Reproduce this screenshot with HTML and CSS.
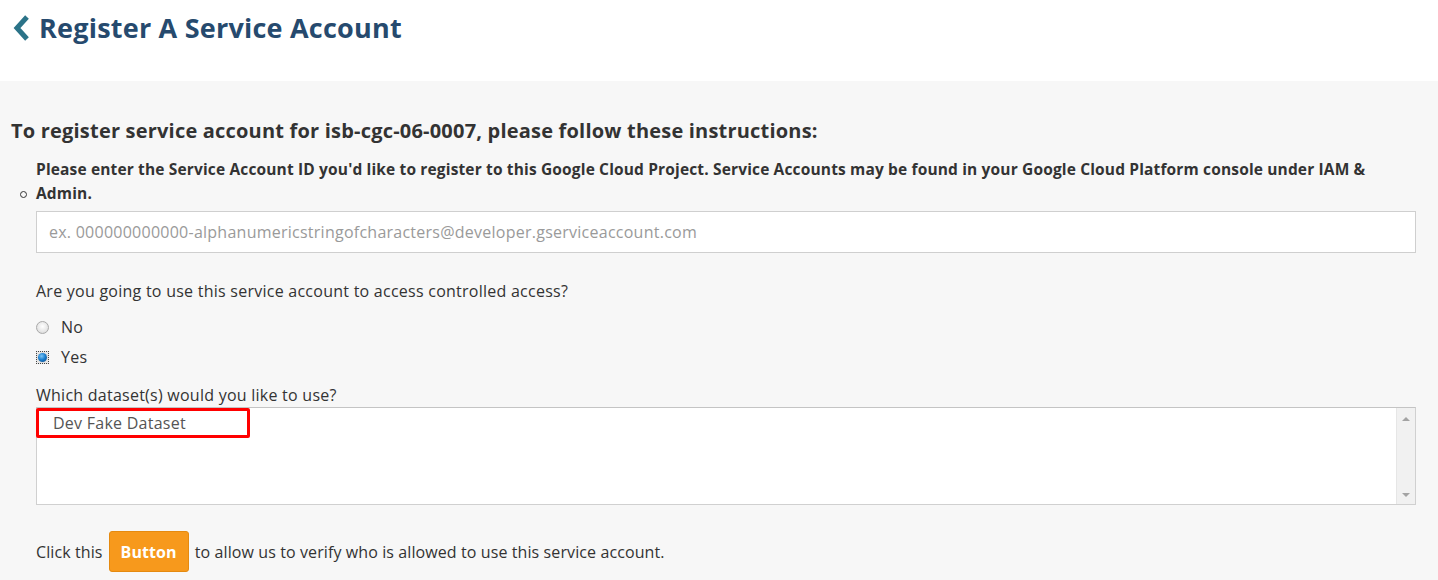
FILE: index.html
```html
<!DOCTYPE html>
<html lang="en">
<head>
<meta charset="utf-8">
<title>Register A Service Account</title>
<link rel="stylesheet" href="styles.css">
</head>
<body>
<header class="page-header">
  <h1 class="page-title">
    <svg class="back-icon" width="18" height="26" viewBox="0 0 18 26" aria-hidden="true">
      <path d="M14 2 L4 13 L14 24" fill="none" stroke="#2b7388" stroke-width="5" stroke-linejoin="miter"/>
    </svg>
    Register A Service Account
  </h1>
</header>
<main class="content">
  <h2 class="instructions">To register service account for isb-cgc-06-0007, please follow these instructions:</h2>
  <ul class="steps">
    <li class="step">
      <p class="step-text">Please enter the Service Account ID you'd like to register to this Google Cloud Project. Service Accounts may be found in your Google Cloud Platform console under IAM &amp; Admin.</p>
      <input class="text-input" type="text" placeholder="ex. 000000000000-alphanumericstringofcharacters@developer.gserviceaccount.com">
      <p class="question">Are you going to use this service account to access controlled access?</p>
      <div class="radio-row"><span class="radio"></span><span class="radio-label">No</span></div>
      <div class="radio-row"><span class="radio radio-checked"><span class="radio-dot"></span></span><span class="radio-label">Yes</span></div>
      <p class="dataset-label">Which dataset(s) would you like to use?</p>
      <div class="listbox">
        <div class="options">
          <div class="option option-marked">Dev Fake Dataset</div>
        </div>
        <div class="scrollbar">
          <span class="arrow arrow-up"></span>
          <span class="arrow arrow-down"></span>
        </div>
      </div>
      <p class="verify">Click this <button class="btn" type="button">Button</button> to allow us to verify who is allowed to use this service account.</p>
    </li>
  </ul>
</main>
</body>
</html>
```
FILE: styles.css
```css
html, body {
  margin: 0;
  padding: 0;
}
body {
  font-family: "Open Sans", "Liberation Sans", sans-serif;
  color: #333333;
  background: #f7f7f7;
}
.page-header {
  background: #ffffff;
  height: 81px;
  padding: 10px 0 0 13px;
  box-sizing: border-box;
}
.page-title {
  margin: 0;
  display: flex;
  align-items: center;
  gap: 8px;
  font-size: 27px;
  letter-spacing: 0.22px;
  font-weight: 700;
  color: #264a6e;
  line-height: 36px;
}
.back-icon {
  display: block;
}
.content {
  padding: 36px 22px 20px 11px;
}
.instructions {
  margin: 0;
  font-size: 20px;
  letter-spacing: 0.2px;
  font-weight: 700;
  color: #333333;
  line-height: 28px;
}
.steps {
  margin: 0;
  padding: 0 0 0 25px;
  list-style: none;
}
.step {
  position: relative;
  font-size: 16px;
  letter-spacing: 0.25px;
}
.step-text {
  margin: 12px 0 0 0;
  font-size: 15.5px;
  letter-spacing: 0.15px;
  font-weight: 700;
  line-height: 24px;
  position: relative;
}
.step-text::after {
  content: "";
  position: absolute;
  left: -16px;
  bottom: 7px;
  width: 5px;
  height: 5px;
  border: 1px solid #333;
  border-radius: 50%;
}
.text-input {
  display: block;
  box-sizing: border-box;
  width: 100%;
  height: 42px;
  margin-top: 6px;
  padding: 0 12px;
  border: 1px solid #cfcfcf;
  background: #ffffff;
  font-family: inherit;
  font-size: 16px;
  letter-spacing: 0.25px;
  color: #333;
  outline: none;
}
.text-input::placeholder {
  color: #9a9a9a;
}
.question {
  margin: 27px 0 0 0;
  line-height: 22px;
}
.radio-row {
  display: flex;
  align-items: center;
  gap: 12px;
  height: 30px;
  margin-top: 10px;
}
.radio-row + .radio-row {
  margin-top: 0;
}
.radio {
  box-sizing: border-box;
  width: 13px;
  height: 13px;
  border-radius: 50%;
  border: 1px solid #a9a9a9;
  background: radial-gradient(circle at 50% 40%, #ffffff 0%, #e6e6e6 60%, #cfcfcf 100%);
  display: flex;
  align-items: center;
  justify-content: center;
}
.radio-checked {
  border-radius: 0;
  border: 1px dotted #444;
  background: #e8e8e8;
}
.radio-dot {
  width: 9px;
  height: 9px;
  border-radius: 50%;
  background: radial-gradient(circle at 40% 35%, #7cc5f5 0%, #1a7fd0 45%, #0a3f7a 100%);
  box-shadow: 0 0 0 1px #dcdcdc;
}
.dataset-label {
  margin: 12px 0 0 0;
  line-height: 22px;
}
.listbox {
  display: flex;
  height: 98px;
  box-sizing: border-box;
  margin-top: 1px;
  border: 1px solid #d0d0d0;
  border-top-color: #c4c4c4;
  background: #ffffff;
}
.options {
  flex: 1;
}
.option {
  color: #555555;
  line-height: 24px;
  padding: 0 0 0 14px;
}
.option-marked {
  width: 214px;
  box-sizing: border-box;
  margin: 0 0 0 -1px;
  border: 3px solid #ff0000;
  border-radius: 2px;
  height: 30px;
}
.scrollbar {
  width: 18px;
  background: #f1f1f1;
  border-left: 1px solid #e6e6e6;
  display: flex;
  flex-direction: column;
  justify-content: space-between;
  align-items: center;
  padding: 9px 0 7px;
}
.arrow {
  width: 0;
  height: 0;
  border-left: 4px solid transparent;
  border-right: 4px solid transparent;
}
.arrow-up {
  border-bottom: 4px solid #a3a3a3;
}
.arrow-down {
  border-top: 4px solid #a3a3a3;
}
.verify {
  margin: 26px 0 0 0;
  display: flex;
  align-items: center;
  letter-spacing: 0.1px;
}
.btn {
  margin: 0 6px;
  height: 41px;
  padding: 0 11px;
  border: 1px solid #e58a10;
  border-radius: 3px;
  background: #f7991c;
  color: #ffffff;
  font-family: inherit;
  font-size: 16px;
  letter-spacing: 0.1px;
  font-weight: 700;
}
```
